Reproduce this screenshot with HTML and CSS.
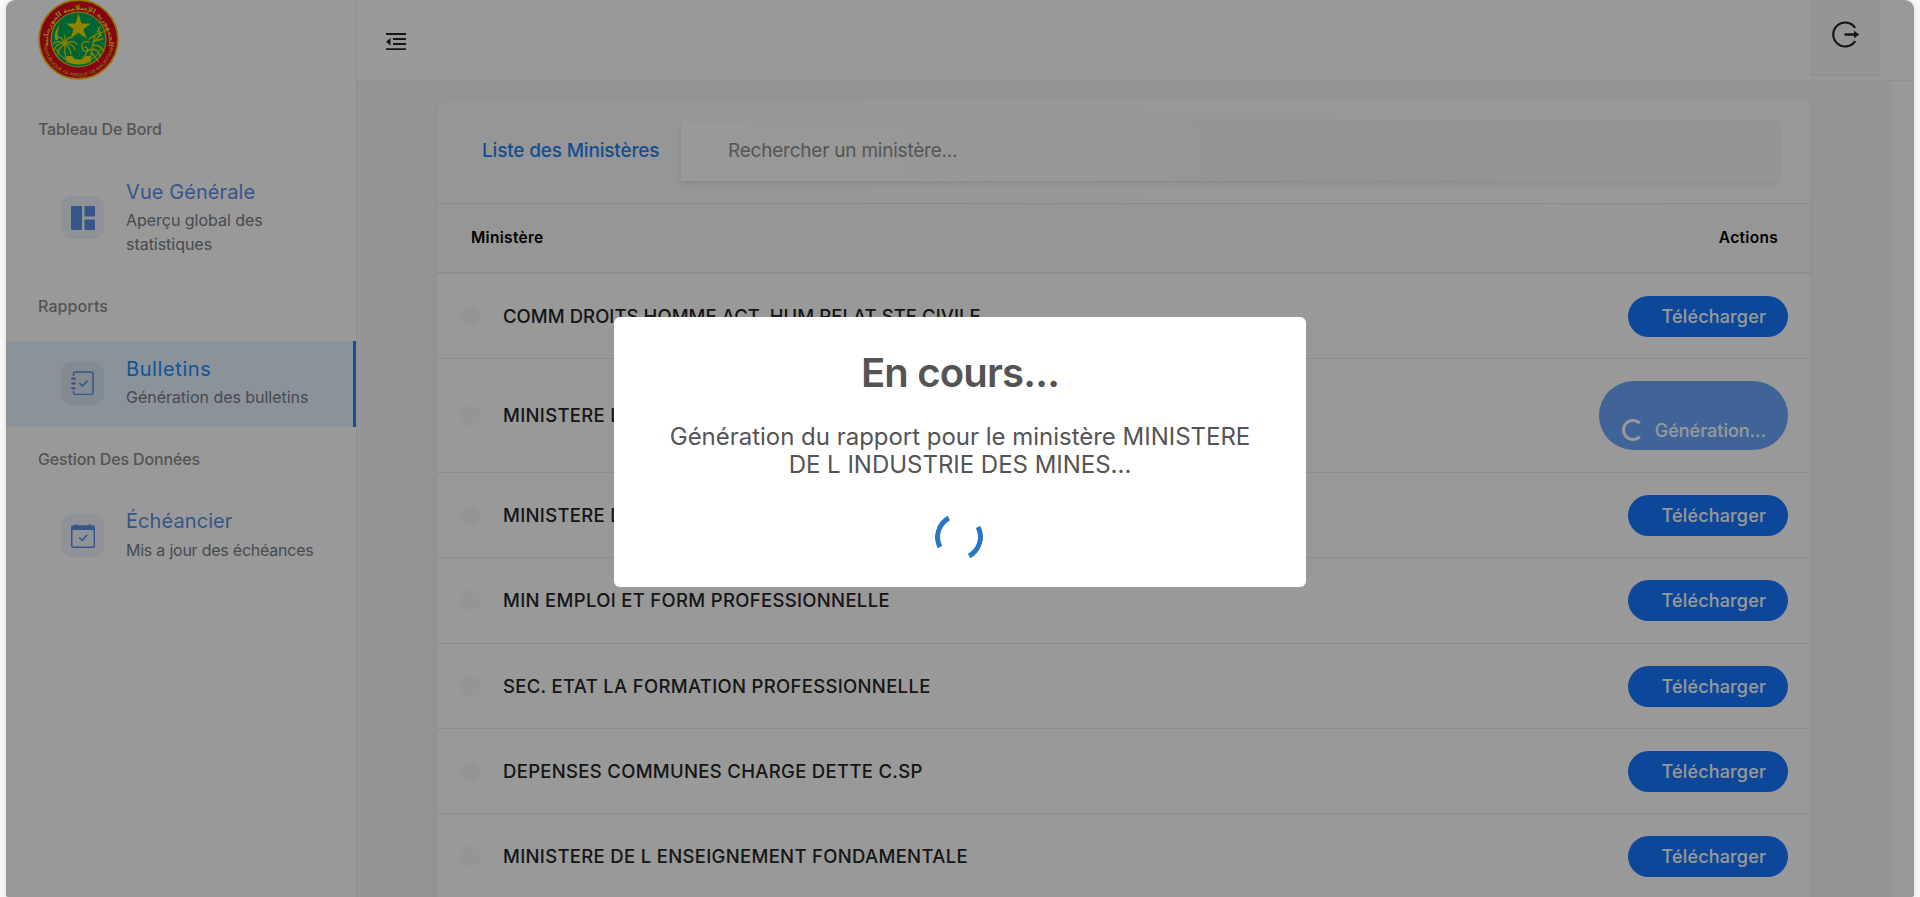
FILE: index.html
```html
<!DOCTYPE html>
<html lang="fr">
<head>
<meta charset="utf-8">
<title>Bulletins - Liste des Ministères</title>
<link rel="stylesheet" href="styles.css">
</head>
<body>
<div class="frame">
  <aside class="sidebar">
    <svg class="logo" width="81" height="81" viewBox="0 0 81 81">
      <defs>
        <path id="arc-top" d="M10.500 47 A30.500 30.500 0 1 1 70.500 47"/>
        <path id="arc-bottom" d="M5 42 A35.500 35.500 0 0 0 76 42"/>
      </defs>
      <circle cx="40.500" cy="40.500" r="40.300" fill="#f5c800"/>
      <circle cx="40.500" cy="40.500" r="38.600" fill="#dc0a24"/>
      <circle cx="40.500" cy="40.500" r="28" fill="#f5d800"/>
      <circle cx="40.500" cy="40.500" r="27" fill="#00a858"/>
      <path fill="none" stroke="#f5dc00" stroke-width="1" d="M18 50 A25 25 0 0 0 63 50"/>
      <path fill="#f5dc00" d="M22 26 C17 31 16 36 17.500 41 H20 C19 36 19.500 31 22 26z M59 26 C61 30 63 34 63.500 37 L61 38 C61 33 60 30 59 26z"/>
      <path fill="#f5dc00" d="M40.500 14.500 L43.500 24.500 H53 L45.500 30.200 L48.500 39.500 L40.500 33.700 L32.500 39.500 L35.500 30.200 L28 24.500 H37.500z"/>
      <path fill="#f5dc00" d="M28.500 57 H34 Q36 60.500 41 60.500 Q46 60.500 48 57 H52.500 V63 Q40.500 68 28.500 63z"/>
      <g fill="none" stroke="#e8d400" stroke-width="1.300" stroke-linecap="round">
        <path d="M27 45 Q26 55 29 62 M27 45 Q20 40 15 45 M27 45 Q19 43 16 51 M27 45 Q21 48 20 55 M27 45 Q24 37 19 38 M27 45 Q29 38 34 38 M27 45 Q34 40 39 45 M27 45 Q35 44 37 51 M27 45 Q32 49 33 55 M27 45 V36"/>
        <path d="M57 36 Q54 48 52 63 M57 36 L51 40 M57 36 L65 33 M56 42 L65 40 M56 46 Q62 46 66 52 M55 50 Q61 51 62 58 M55 50 Q49 50 47 57 M47 57 L43 62 M59 33 L62 28 M54 54 L60 62 M53 58 L47 64 M55 44 L62 36"/>
        <path d="M51 43 Q44 41 44 47 Q44 53 49 52 Q51 49 47 48"/>
      </g>
      <text class="seal-ar"><textPath href="#arc-top" startOffset="50%" text-anchor="middle">الجمهورية الإسلامية الموريتانية</textPath></text>
      <text class="seal-fr"><textPath href="#arc-bottom" startOffset="50%" text-anchor="middle">REPUBLIQUE ISLAMIQUE DE MAURITANIE</textPath></text>
    </svg>

    <h6 class="group group-first">Tableau De Bord</h6>
    <a class="nav-item">
      <span class="nav-icon">
        <svg width="24" height="24" viewBox="0 0 24 24" fill="currentColor"><rect width="11" height="24" rx="1"/><rect x="13.500" width="10.500" height="10.500" rx="1"/><rect x="13.500" y="13.500" width="10.500" height="10.500" rx="1"/></svg>
      </span>
      <span class="nav-text"><b class="nav-title">Vue Générale</b><span class="nav-sub">Aperçu global des<br>statistiques</span></span>
    </a>

    <h6 class="group group-reports">Rapports</h6>
    <a class="nav-item active">
      <span class="nav-icon">
        <svg width="24" height="24" viewBox="0 0 24 24" fill="none" stroke="currentColor" stroke-width="1.500"><path d="M2.500 5 V3 Q2.500 1 4.500 1 H20 Q22 1 22 3 V21.500 Q22 23.500 20 23.500 H4.500 Q2.500 23.500 2.500 21.500 V20"/><path d="M0 7.700 H4.800 M0 12.500 H4.800 M0 17.300 H4.800 M2.500 6 V9 M2.500 11 V14 M2.500 16 V19" stroke-width="1.400"/><path d="M8.500 12 L11.500 15 L16.500 9.500" stroke-width="1.700"/></svg>
      </span>
      <span class="nav-text"><b class="nav-title t-bulletins">Bulletins</b><span class="nav-sub">Génération des bulletins</span></span>
    </a>

    <h6 class="group">Gestion Des Données</h6>
    <a class="nav-item">
      <span class="nav-icon">
        <svg width="24" height="24" viewBox="0 0 24 24" fill="none" stroke="currentColor" stroke-width="1.500"><rect x=".75" y="2" width="22.500" height="21.200" rx="1.500"/><path d="M1 2 H23 V6 H1z" fill="currentColor" stroke="none"/><path d="M5.500 0 V3 M18.500 0 V3"/><path d="M8.300 13.500 L11.300 16.300 L16 11" stroke-width="1.700"/></svg>
      </span>
      <span class="nav-text"><b class="nav-title">Échéancier</b><span class="nav-sub t-tight">Mis a jour des échéances</span></span>
    </a>
  </aside>

  <div class="main">
    <header class="topbar">
      <svg class="fold" width="20" height="18" viewBox="0 0 20 18"><path d="M0 1h20 M7 6h13 M7 11h13 M0 16.200h20" stroke="#262626" stroke-width="1.800"/><path d="M0 8.700 L4.500 5 V12.400z" fill="#262626"/></svg>
      <button class="logout">
        <svg width="28" height="28" viewBox="0 0 28 28"><path d="M23.200 6.800 A12 12 0 1 0 23.200 20.200" fill="none" stroke="#262626" stroke-width="2.200"/><path d="M12.500 13.500h10.500" stroke="#262626" stroke-width="2.400"/><path d="M22 9.800 L27.300 13.500 L22 17.200z" fill="#262626"/></svg>
      </button>
    </header>
    <div class="body">
      <section class="content">
        <div class="card">
          <div class="card-head">
            <h5 class="card-title">Liste des Ministères</h5>
            <div class="search">Rechercher un ministère...</div>
          </div>
          <div class="columns"><span>Ministère</span><span>Actions</span></div>
          <div class="row"><i class="dot"></i><span class="name t-narrow">COMM DROITS HOMME ACT. HUM RELAT.STE CIVILE</span><button class="btn">Télécharger</button></div>
          <div class="row tall"><i class="dot"></i><span class="name">MINISTERE DE L</span><button class="btn busy"><i class="ring"></i>Génération...</button></div>
          <div class="row"><i class="dot"></i><span class="name">MINISTERE DE L</span><button class="btn">Télécharger</button></div>
          <div class="row tall"><i class="dot"></i><span class="name">MIN EMPLOI ET FORM PROFESSIONNELLE</span><button class="btn">Télécharger</button></div>
          <div class="row"><i class="dot"></i><span class="name">SEC. ETAT LA FORMATION PROFESSIONNELLE</span><button class="btn">Télécharger</button></div>
          <div class="row"><i class="dot"></i><span class="name">DEPENSES COMMUNES CHARGE DETTE C.SP</span><button class="btn">Télécharger</button></div>
          <div class="row"><i class="dot"></i><span class="name">MINISTERE DE L ENSEIGNEMENT FONDAMENTALE</span><button class="btn">Télécharger</button></div>
        </div>
      </section>
      <div class="gutter"></div>
    </div>
  </div>

  <div class="overlay">
    <div class="modal">
      <h2 class="modal-title">En cours...</h2>
      <p class="modal-text">Génération du rapport pour le ministère MINISTERE<br>DE L INDUSTRIE DES MINES...</p>
      <div class="loader"></div>
    </div>
  </div>
</div>
</body>
</html>
```
FILE: styles.css
```css
* { box-sizing: border-box; }
html, body { height: 100%; }
body {
  margin: 0;
  padding: 0 6px;
  overflow: hidden;
  background: #f8f8f8;
  font-family: Inter, "Liberation Sans", sans-serif;
}
h2, h5, h6, p { margin: 0; font-weight: 500; }
button { border: 0; font-family: inherit; }

.frame {
  position: relative;
  display: flex;
  height: 897px;
  overflow: hidden;
  background: #fff;
  border-radius: 9px 9px 2px 2px;
  box-shadow: 0 0 4px rgba(0, 0, 0, .15);
}

/* Sidebar */
.sidebar {
  width: 351px;
  flex: none;
  border-right: 1px solid #f0f0f0;
}
.logo { display: block; margin: -1px 0 0 32px; }
.seal-ar { font: bold 7px "DejaVu Sans", sans-serif; fill: #f5d400; }
.seal-fr { font: 5px "Liberation Sans", sans-serif; fill: #f5d400; }
.group {
  margin: 20px 0 22.500px 32px;
  font-size: 16px;
  line-height: 24px;
  letter-spacing: -.15px;
  color: #8c8c8c;
}
.group-first { margin-top: 37px; }
.group-reports { margin-top: 21px; letter-spacing: .1px; }
.nav-item {
  display: flex;
  align-items: center;
  min-height: 86px;
  padding: 12px 0 17px 55px;
}
.active {
  background: #e8f3ff;
  border-right: 3px solid #1890ff;
}
.nav-icon {
  display: flex;
  align-items: center;
  justify-content: center;
  width: 43px;
  height: 43px;
  margin: 4px 22px 0 0;
  border-radius: 11px;
  background: #eef3fb;
  color: #5b8fe6;
}
.active .nav-icon { background: #dae7f3; }
.nav-text { display: flex; flex-direction: column; }
.nav-title {
  font-weight: 400;
  font-size: 20px;
  line-height: 32.500px;
  letter-spacing: .08px;
  color: #5b8fe6;
}
.t-bulletins { letter-spacing: .6px; }
.active .nav-title { color: #1890ff; }
.nav-sub {
  font-size: 16px;
  line-height: 24px;
  letter-spacing: -.03px;
  color: #757d87;
}
.t-tight { letter-spacing: -.23px; }

/* Main column */
.main { flex: 1; display: flex; flex-direction: column; }
.topbar {
  display: flex;
  align-items: flex-start;
  justify-content: space-between;
  flex: none;
  height: 81px;
  padding: 0 34px 0 29px;
  border-bottom: 1px solid #f0f0f0;
}
.fold { margin-top: 33px; }
.logout {
  display: flex;
  align-items: flex-start;
  justify-content: center;
  width: 70px;
  height: 76px;
  padding: 21px 0 0 1px;
  border-bottom: 1px solid #ececec;
  background: #f9f9f9;
}
.body { flex: 1; display: flex; min-height: 0; }
.content {
  flex: 1;
  padding: 18px 81px 0 80px;
  background: #f9f9f9;
}
.gutter { width: 23px; background: #fff; }
.card {
  height: 820px;
  background: #fff;
  border-radius: 8px 8px 0 0;
  box-shadow: 0 2px 8px rgba(0, 0, 0, .06);
}
.card-head {
  display: flex;
  align-items: flex-start;
  gap: 22px;
  height: 105px;
  padding: 22px 32px 0 44px;
  border-bottom: 1px solid #e8e8e8;
  border-radius: 8px 8px 0 0;
  background: linear-gradient(90deg, #fafafa, #fff);
}
.card-title {
  width: 178px;
  padding: 17px 0 0 1px;
  font-size: 19px;
  line-height: 26px;
  letter-spacing: -.18px;
  white-space: nowrap;
  color: #1e84f5;
}
.search {
  flex: 1;
  height: 60px;
  padding: 17px 0 0 47px;
  background: linear-gradient(90deg, #fff, #f9f9f9 50%);
  box-shadow: 0 2px 6px rgba(0, 0, 0, .1);
  font-size: 19px;
  line-height: 26px;
  letter-spacing: -.22px;
  color: #8f8f8f;
}
.columns {
  display: flex;
  justify-content: space-between;
  height: 70px;
  padding: 22px 32px 0 34px;
  border-bottom: 2px solid #ededed;
  background: #fafafa;
  font-size: 15.500px;
  font-weight: 600;
  line-height: 24px;
  letter-spacing: .3px;
  color: #000;
}
.row {
  display: flex;
  align-items: center;
  padding: 22px 22px 21px 23px;
  border-bottom: 1px solid #e8e9ee;
}
.row.tall { padding-bottom: 22px; }
.dot {
  width: 21px;
  height: 21px;
  margin-right: 22px;
  border-radius: 50%;
  background: #f8f8f8;
}
.name {
  flex: 1;
  padding-bottom: 2px;
  font-size: 18.500px;
  font-weight: 500;
  line-height: 24px;
  letter-spacing: .31px;
  color: #262626;
}
.t-narrow { letter-spacing: .05px; }
.btn {
  height: 41px;
  padding: 0 22px 0 0;
  width: 160px;
  border-radius: 21px;
  background: #1677ff;
  color: #fff;
  font-size: 18px;
  font-weight: 500;
  letter-spacing: .15px;
  text-align: right;
  white-space: nowrap;
}
.busy {
  display: flex;
  align-items: center;
  justify-content: flex-end;
  gap: 11px;
  width: 189px;
  height: 69px;
  padding: 30px 22px 0 0;
  border-radius: 35px;
  background: #6ba7fd;
  letter-spacing: 0;
}
.ring {
  width: 22px;
  height: 22px;
  margin-top: -2px;
  border: 3px solid #fff;
  border-right-color: transparent;
  border-radius: 50%;
}

/* Progress dialog */
.overlay {
  position: absolute;
  inset: 0;
  display: flex;
  align-items: flex-start;
  justify-content: center;
  padding-top: 317px;
  background: rgba(0, 0, 0, .4);
}
.modal {
  display: flex;
  flex-direction: column;
  align-items: center;
  width: 692px;
  height: 270px;
  padding-top: 32px;
  border-radius: 6px;
  background: #fff;
  color: #545454;
}
.modal-title {
  font-size: 40px;
  font-weight: 560;
  line-height: 48px;
  letter-spacing: -.8px;
}
.modal-text {
  margin-top: 26px;
  font-size: 24px;
  font-weight: 400;
  line-height: 28px;
  letter-spacing: -.02px;
  text-align: center;
}
.loader {
  width: 48px;
  height: 48px;
  margin: 34px 2px 0 0;
  border: 5.400px solid;
  border-color: #2778c4 transparent;
  border-radius: 50%;
  transform: rotate(-73deg);
}
```
